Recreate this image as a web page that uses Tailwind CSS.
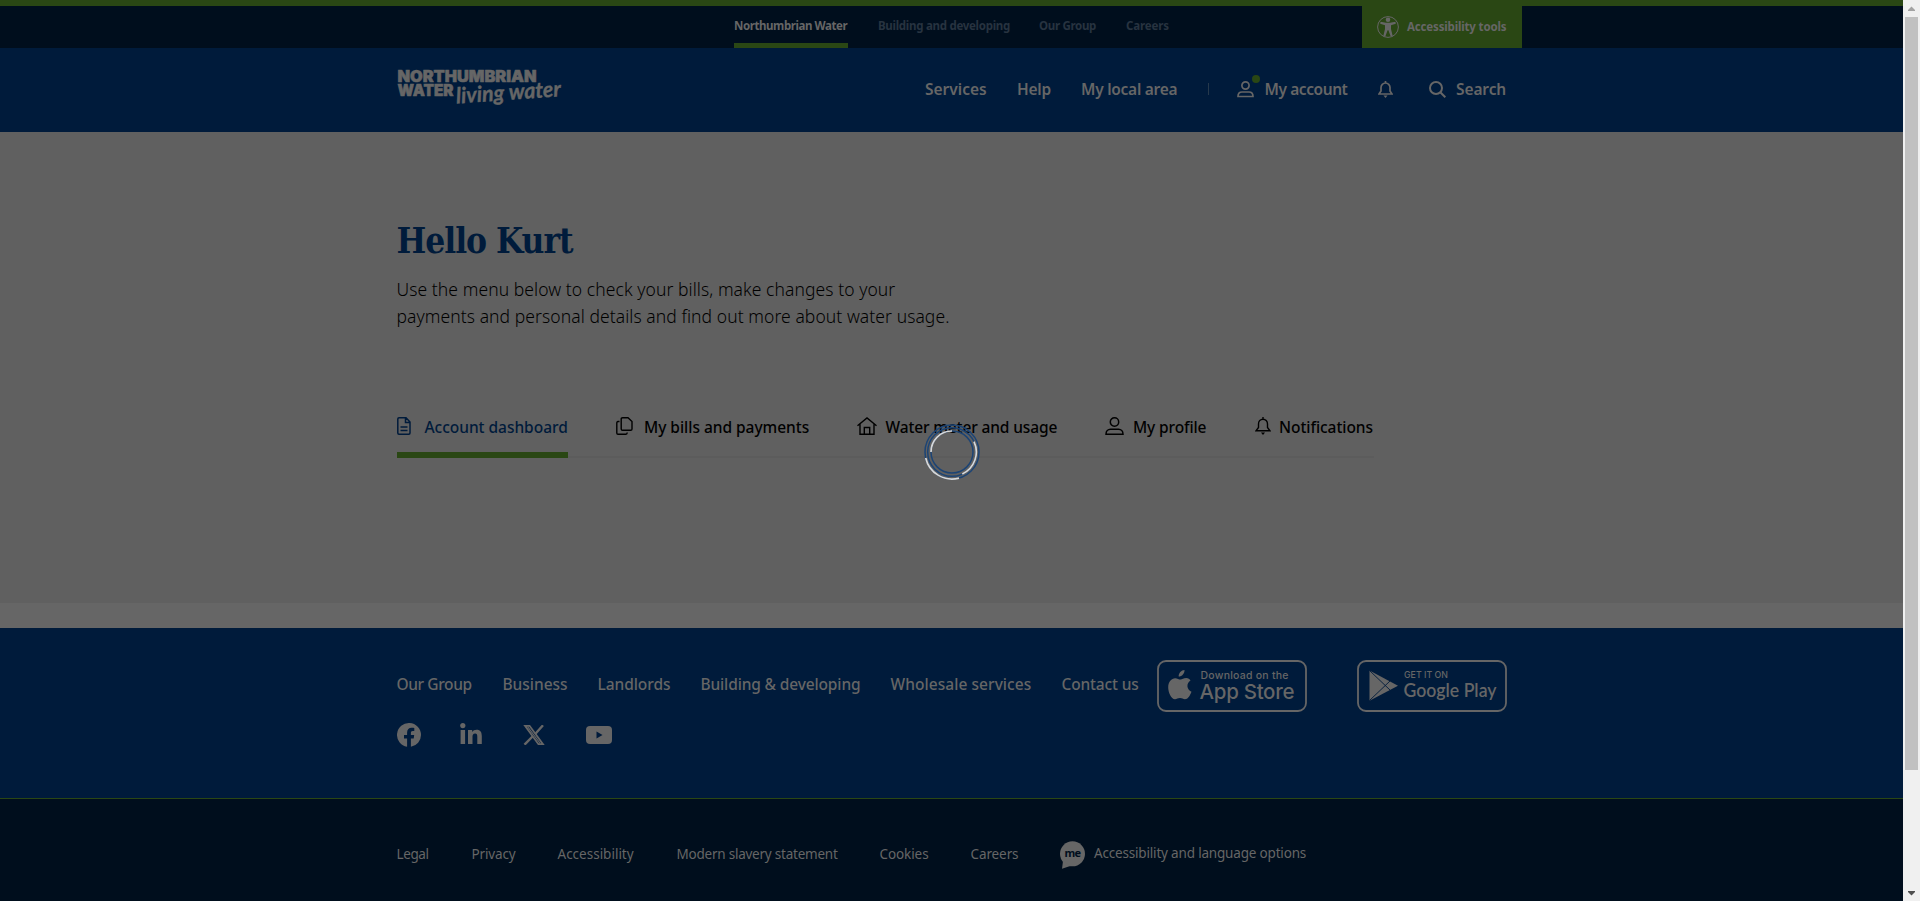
<!DOCTYPE html>
<html lang="en">
<head>
<meta charset="utf-8">
<title>Account dashboard</title>
<script src="https://cdn.jsdelivr.net/npm/@tailwindcss/browser@4"></script>
</head>
<body class="bg-[#666] font-['Noto_Sans','Open_Sans',sans-serif] text-[#666] overflow-hidden">
<div class="flex h-[901px] w-[1920px]">
  <div class="flex h-full w-[1903px] flex-col">
    <header>
      <div class="h-1.5 bg-[#2a4714]"></div>
      <div class="flex h-[42px] bg-[#000e1d] pl-[734px] text-[11.5px] font-bold leading-[39px] whitespace-nowrap">
        <a class="h-[42px] w-[114px] border-b-[5px] border-[#2a4714] tracking-[-0.42px]">Northumbrian Water</a>
        <a class="ml-[30px] w-[132px] tracking-[-0.28px] text-[#273340]">Building and developing</a>
        <a class="ml-[29px] w-[57px] tracking-[-0.32px] text-[#273340]">Our Group</a>
        <a class="ml-[30px] w-[43px] tracking-[-0.12px] text-[#273340]">Careers</a>
        <a class="ml-[193px] flex w-[160px] items-center bg-[#2a4714] pl-[15px] leading-[18px] tracking-[-0.16px]">
          <svg class="size-[22px] shrink-0" viewBox="0 0 22 22" fill="#666"><circle cx="11" cy="11" r="10.4" fill="none" stroke="#666"/><circle cx="11" cy="3.700" r="2.300"/><path d="M3.500 5.700 9 6.800h4l5.500-1.100.3 2-4.800 1.600v3.700l1.700 7-2 .6-2.300-6.400h-.8L8.300 20.600l-2-.6L8 13V9.300L3.200 7.700z"/></svg>
          <span class="ml-2">Accessibility tools</span>
        </a>
      </div>
      <div class="flex h-[84px] bg-[#001b3b] pl-[397px]">
        <svg class="mt-[21px] h-[48px] w-[167px] overflow-visible" viewBox="0 0 167 48" fill="#666">
          <text x="0.500" y="13" font-family="Inter" font-weight="900" font-size="16" textLength="139" lengthAdjust="spacingAndGlyphs" stroke="#666" stroke-width=".6">NORTHUMBRIAN</text>
          <text x="0.500" y="26.500" font-family="Inter" font-weight="900" font-size="16" textLength="56" lengthAdjust="spacingAndGlyphs" stroke="#666" stroke-width=".6">WATER</text>
          <text transform="translate(59.500 34.500) rotate(-4)" font-family="Lato" font-style="italic" font-weight="700" font-size="22" textLength="105" lengthAdjust="spacingAndGlyphs" stroke="#666" stroke-width=".4">living water</text>
        </svg>
        <nav class="ml-[361px] flex pt-[29px] text-[15.5px] font-semibold leading-6 whitespace-nowrap">
          <a class="w-[62px]">Services</a>
          <a class="ml-[30px] w-[34px] tracking-[-0.22px]">Help</a>
          <a class="ml-[30px] w-[97px] tracking-[-0.26px]">My local area</a>
          <i class="mt-1.5 ml-[30px] h-3 w-px bg-[#26394c]"></i>
          <a class="relative ml-[28px] flex w-[111px] tracking-[-0.42px]">
            <svg class="mt-1 size-[17px] shrink-0" viewBox="0 0 17 17" fill="none" stroke="#666" stroke-width="1.700"><circle cx="8.500" cy="4.500" r="3.600"/><path d="M1 15.500c0-3 2-4.500 4-4.500h7c2 0 4 1.500 4 4.500z"/></svg>
            <i class="absolute top-[-2px] left-[15px] size-2 rounded-full bg-[#2a4714]"></i>
            <span class="ml-[10.5px]">My account</span>
          </a>
          <svg class="mt-1 ml-[29.5px] h-[17px] w-[15px]" viewBox="0 0 15 17" fill="none" stroke="#666" stroke-width="1.700"><path d="M1 13h13l-2-3V6.500c0-2.500-2-4.500-4.500-4.500S3 4 3 6.500V10zM7.500 0v2"/><path d="M5.500 14.500h4L7.500 17z" fill="#666" stroke="none"/></svg>
          <svg class="mt-1 ml-[36px] size-[17px]" viewBox="0 0 17 17" fill="none" stroke="#666" stroke-width="2"><circle cx="7" cy="7" r="6"/><path d="m11.300 11.300 5 5"/></svg>
          <span class="ml-[10.5px] tracking-[-0.1px]">Search</span>
        </nav>
      </div>
    </header>

    <main class="h-[471px] bg-[#606060] pt-[85px] pl-[396.5px] text-black">
      <h1 class="h-12 font-['DejaVu_Serif_Condensed','DejaVu_Serif',serif] text-[35px] font-bold leading-[48px] tracking-[-1.03px] text-[#001b3b]">Hello Kurt</h1>
      <p class="mt-[11px] text-[17.5px] font-light leading-[27px] tracking-[0.07px] whitespace-nowrap">Use the menu below to check your bills, make changes to your<br>payments and personal details and find out more about water usage.</p>
      <nav class="mt-[82px] flex h-[46px] w-[977px] border-b-2 border-[#5c5c5c] text-[15.5px] font-medium leading-6 whitespace-nowrap">
        <a class="flex h-[46px] w-[171px] border-b-6 border-[#2a4714] tracking-[-0.03px] text-[#001b3b]">
          <svg class="mt-[5px] h-[18px] w-[14px] shrink-0" viewBox="0 0 14 18" fill="none" stroke="currentColor" stroke-width="1.500"><path d="M2 .8h7l4 4.200v11q0 1.200-1.200 1.200H2Q.8 17.200.8 16V2Q.8.8 2 .8zM8.500 1v4.500H13M3.500 10h7M3.500 13.500h7"/></svg>
          <span class="mt-[3px] ml-[14px]">Account dashboard</span>
        </a>
        <a class="ml-[48px] flex w-[194px] tracking-[-0.03px]">
          <svg class="mt-[5px] h-[18px] w-[17px] shrink-0" viewBox="0 0 17 18" fill="none" stroke="currentColor" stroke-width="1.400"><path d="M6.500.8H12l4 3.700V12q0 1.300-1.300 1.300H6.500Q5.200 13.300 5.200 12V2Q5.200.8 6.500.8zM3.500 4.500H2Q.8 4.500.8 6v10q0 1.200 1.200 1.200h8q1.200 0 1.200-1.700"/></svg>
          <span class="mt-[3px] ml-[11.5px]">My bills and payments</span>
        </a>
        <a class="ml-[47.5px] flex w-[201px] tracking-[-0.13px]">
          <svg class="mt-[5px] h-[18px] w-[20px] shrink-0" viewBox="0 0 20 18" fill="none" stroke="currentColor" stroke-width="1.400"><path d="M.5 8.800 10 1l9.500 7.800M3 7v10.200h14V7M7.300 17v-6.500h5.400V17"/></svg>
          <span class="mt-[3px] ml-[8.5px]">Water meter and usage</span>
        </a>
        <a class="ml-[47px] flex w-[102px] tracking-[-0.12px]">
          <svg class="mt-[5px] h-[18px] w-[19px] shrink-0" viewBox="0 0 19 18" fill="none" stroke="currentColor" stroke-width="1.500"><circle cx="9.500" cy="5" r="4.200"/><path d="M1 17.200c0-3 2-4.900 4.500-4.900h8c2.500 0 4.500 1.900 4.500 4.900z"/></svg>
          <span class="mt-[3px] ml-[9px]">My profile</span>
        </a>
        <a class="ml-[47.5px] flex tracking-[-0.05px]">
          <svg class="mt-[5px] h-[18px] w-[16px] shrink-0" viewBox="0 0 16 18" fill="none" stroke="currentColor" stroke-width="1.400"><path d="M1 13.800h14l-2.500-3.300V7c0-2.800-2-4.800-4.500-4.800S3.500 4.200 3.500 7v3.500zM8 0v2"/><path d="M6 15.500h4L8 18z" fill="currentColor" stroke="none"/></svg>
          <span class="mt-[3px] ml-[8.5px]">Notifications</span>
        </a>
      </nav>
    </main>
    <div class="h-[25px]"></div>

    <footer>
      <div class="h-[170px] bg-[#001b3b] pl-[396.5px]">
        <div class="flex pt-8">
          <nav class="flex w-[760px] pt-[12px] text-[15.5px] font-medium leading-6 whitespace-nowrap">
            <a class="w-[75px] tracking-[-0.4px]">Our Group</a>
            <a class="ml-[31px] w-[65px] tracking-[-0.03px]">Business</a>
            <a class="ml-[30px] w-[73px] tracking-[-0.06px]">Landlords</a>
            <a class="ml-[30px] w-[160px] tracking-[-0.14px]">Building &amp; developing</a>
            <a class="ml-[30px] w-[141px] tracking-[0.06px]">Wholesale services</a>
            <a class="ml-[30px] tracking-[-0.16px]">Contact us</a>
          </nav>
          <svg class="h-[52px] w-[150px]" viewBox="0 0 150 52" fill="#666">
            <rect x="1" y="1" width="148" height="50" rx="8" fill="none" stroke="#666" stroke-width="1.800"/>
            <path d="M27.500 10c.3 3.500-2.700 6.700-5.800 6.600-.3-3.300 2.700-6.500 5.800-6.600zM33.500 20.500c-4.600 3-3.800 9 1 11.200-1.500 4-3.700 7.500-6.500 7.500-2 0-2.800-1.200-5-1.200s-3.200 1.200-5 1.200c-4 0-6.800-7.200-6.800-12 0-5.500 3.300-9 7-9 2.200 0 3.700 1.400 5.300 1.400s3-1.500 5.800-1.500c1.800 0 3.500 1 4.200 2.400z"/>
            <text x="43.500" y="19" font-family="Inter" font-size="10.500" font-weight="500" textLength="88">Download on the</text>
            <text x="42.500" y="38.500" font-family="Inter" font-size="20.500" font-weight="500" textLength="95">App Store</text>
          </svg>
          <svg class="ml-[50px] h-[52px] w-[150px]" viewBox="0 0 150 52" fill="#666">
            <rect x="1" y="1" width="148" height="50" rx="8" fill="none" stroke="#666" stroke-width="1.800"/>
            <path d="m12.500 11 .5-.3 28 15L13 40.500l-.5-.5z"/><path d="m13 11 20 19M13 40l20-19" stroke="#001b3b" stroke-width=".9"/>
            <text x="47" y="18" font-family="Inter" font-size="9.500" font-weight="500" textLength="44" lengthAdjust="spacingAndGlyphs">GET IT ON</text>
            <text x="46.500" y="36.500" font-family="Lato" font-size="19" font-weight="600" textLength="93" lengthAdjust="spacingAndGlyphs">Google Play</text>
          </svg>
        </div>
        <div class="mt-[10px] flex h-[26px] items-center">
          <svg class="size-[24px]" viewBox="0 0 24 24" fill="#666"><path d="M24 12a12 12 0 1 0-13.900 11.850V15.500H7V12h3.100V9.400c0-3 1.800-4.700 4.500-4.700 1.300 0 2.700.2 2.700.2v3h-1.500c-1.500 0-1.900.9-1.900 1.900V12h3.300l-.5 3.500h-2.800v8.350A12 12 0 0 0 24 12z"/></svg>
          <svg class="ml-[39.5px] mb-[3px] h-[21px] w-[22px]" viewBox="0 0 22 21" fill="#666"><circle cx="2.800" cy="2.600" r="2.600"/><path d="M.6 7h4.500v14H.6zM8 7h4.200v2c1-1.600 2.300-2.300 4.300-2.300 4 0 5.300 2.400 5.300 6.300v8h-4.500v-7.300c0-2-.5-3.200-2.200-3.200-1.900 0-2.600 1.300-2.600 3.300V21H8z"/></svg>
          <svg class="ml-[40.5px] h-[20px] w-[22px]" viewBox="0 0 22 20" fill="none" stroke="#666"><path d="M2 .8h4.500L20 19.200h-4.500z" stroke-width="1.800"/><path d="M20 .3 12.200 9M9.500 11.500 1.500 19.700" stroke-width="2.400"/><path d="m4.500 1.500 12.700 17" stroke-width="1.200"/></svg>
          <svg class="ml-[41px] h-[18px] w-[26px]" viewBox="0 0 26 18"><rect width="26" height="18" rx="4" fill="#666"/><path d="m10.500 5.500 6 3.500-6 3.500z" fill="#001b3b"/></svg>
        </div>
      </div>
      <div class="flex h-[103px] border-t border-[#2a4714] bg-[#000e1d] pt-[43px] pl-[396.5px] text-[13.5px] leading-6 whitespace-nowrap">
        <a class="w-[32px] tracking-[-0.4px]">Legal</a>
        <a class="ml-[43px] w-[44px] tracking-[-0.15px]">Privacy</a>
        <a class="ml-[42px] w-[76px]">Accessibility</a>
        <a class="ml-[43px] w-[161px] tracking-[-0.23px]">Modern slavery statement</a>
        <a class="ml-[42px] w-[49px] tracking-[-0.09px]">Cookies</a>
        <a class="ml-[42px] w-[48px] tracking-[-0.1px]">Careers</a>
        <a class="ml-[41.5px] flex tracking-[-0.18px]">
          <svg class="-mt-px h-[28px] w-[25px]" viewBox="0 0 25 28"><g fill="#666"><circle cx="12.500" cy="12.800" r="12.500"/><path d="M3 20 2 27.800l9-3z"/></g><text x="4.500" y="16" font-family="Noto Sans" font-weight="700" font-size="11" textLength="16.500" fill="#000e1d">me</text></svg>
          <span class="-mt-px ml-[9px]">Accessibility and language options</span>
        </a>
      </div>
    </footer>
  </div>
  <aside class="flex h-full w-[17px] flex-col items-center bg-[#f0f0f0]">
    <svg class="h-[17px] w-[7px]" viewBox="0 0 7 17" fill="#a3a3a3"><path d="M0 11h7V10L3.500 6.500 0 10z"/></svg>
    <div class="h-[753px] w-[13px] bg-[#c1c1c1]"></div>
    <svg class="mt-auto h-[17px] w-[7px]" viewBox="0 0 7 17" fill="#505050"><path d="M0 7h7v1l-3.500 3.500L0 8z"/></svg>
  </aside>
</div>
<!-- loading spinner -->
<svg class="absolute top-[424px] left-[924px] size-14" viewBox="-28 -28 56 56" fill="none" stroke="#1c4475" stroke-width="1.500"><circle r="27"/><circle r="24.300"/><circle r="21"/><g stroke="#d8d8d8" stroke-width="1.700"><path d="M-26.300 6A27 27 0 0 0 7 26.100M22-10.300A24.300 24.300 0 0 1 10.300 22M-21 0A21 21 0 0 1 0-21"/></g></svg>
</body>
</html>
